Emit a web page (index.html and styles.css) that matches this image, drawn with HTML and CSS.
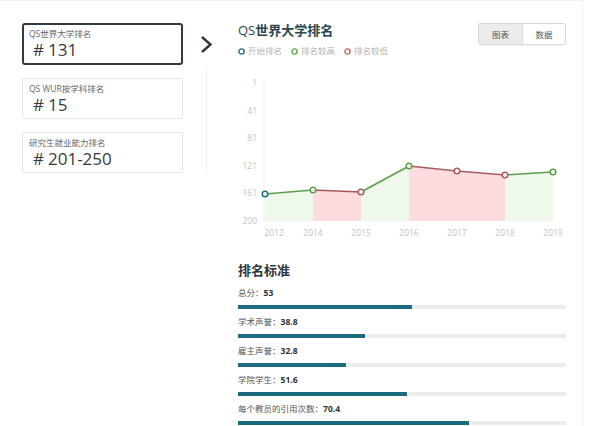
FILE: index.html
```html
<!DOCTYPE html>
<html lang="zh-CN">
<head>
<meta charset="utf-8">
<title>QS世界大学排名</title>
<link rel="stylesheet" href="styles.css">
</head>
<body>
<div class="page">
  <aside class="ranks">
    <div class="rank-card active">
      <div class="rank-label">QS世界大学排名</div>
      <div class="rank-value"><span class="hash">#</span>131</div>
    </div>
    <div class="rank-card">
      <div class="rank-label">QS WUR按学科排名</div>
      <div class="rank-value"><span class="hash">#</span>15</div>
    </div>
    <div class="rank-card">
      <div class="rank-label">研究生就业能力排名</div>
      <div class="rank-value"><span class="hash">#</span>201-250</div>
    </div>
  </aside>

  <div class="sep">
    <svg class="chevron" width="13" height="19" viewBox="0 0 13 19"><path d="M2 2 L10.5 9.5 L2 17" fill="none" stroke="#2b3a40" stroke-width="2.4"/></svg>
    <div class="vline"></div>
  </div>

  <main class="detail">
    <div class="head">
      <div class="head-left">
        <h2 class="title"><span class="qs">QS</span>世界大学排名</h2>
        <ul class="legend">
          <li><svg width="7" height="7" viewBox="0 0 7 7"><circle cx="3.5" cy="3.5" r="2.6" fill="#fff" stroke="#1d6b80" stroke-width="1.4"/></svg>开始排名</li>
          <li><svg width="7" height="7" viewBox="0 0 7 7"><circle cx="3.5" cy="3.5" r="2.6" fill="#fff" stroke="#5ea84a" stroke-width="1.4"/></svg>排名较高</li>
          <li><svg width="7" height="7" viewBox="0 0 7 7"><circle cx="3.5" cy="3.5" r="2.6" fill="#fff" stroke="#c46b6b" stroke-width="1.4"/></svg>排名较低</li>
        </ul>
      </div>
      <div class="toggle">
        <button class="tbtn on">图表</button><button class="tbtn">数据</button>
      </div>
    </div>

    <svg class="chart" width="332" height="172" viewBox="238 72 332 172">
      <line x1="264" y1="80" x2="264" y2="221" stroke="#f0f0f0" stroke-width="1"/>
      <g class="ylab" font-size="8.5" fill="#c2c2c2" text-anchor="end">
        <text x="257" y="86">1</text>
        <text x="257" y="113.6">41</text>
        <text x="257" y="141.2">81</text>
        <text x="257" y="168.8">121</text>
        <text x="257" y="196.4">161</text>
        <text x="257" y="224">200</text>
      </g>
      <polygon points="265,194 313,190 313,221 265,221" fill="#eef8eb"/>
      <polygon points="313,190 361,192 361,221 313,221" fill="#fddcdf"/>
      <polygon points="361,192 409,166 409,221 361,221" fill="#eef8eb"/>
      <polygon points="409,166 457,171 457,221 409,221" fill="#fddcdf"/>
      <polygon points="457,171 505,175 505,221 457,221" fill="#fddcdf"/>
      <polygon points="505,175 553,172 553,221 505,221" fill="#eef8eb"/>
      <g fill="none" stroke-width="1.5">
        <line x1="265" y1="194" x2="313" y2="190" stroke="#5a9f47"/>
        <line x1="313" y1="190" x2="361" y2="192" stroke="#a95a5c"/>
        <line x1="361" y1="192" x2="409" y2="166" stroke="#5a9f47"/>
        <line x1="409" y1="166" x2="457" y2="171" stroke="#a95a5c"/>
        <line x1="457" y1="171" x2="505" y2="175" stroke="#a95a5c"/>
        <line x1="505" y1="175" x2="553" y2="172" stroke="#5a9f47"/>
      </g>
      <g fill="#fff" stroke-width="1.5">
        <circle cx="265" cy="194" r="2.8" stroke="#1d6b80"/>
        <circle cx="313" cy="190" r="2.8" stroke="#5a9f47"/>
        <circle cx="361" cy="192" r="2.8" stroke="#a95a5c"/>
        <circle cx="409" cy="166" r="2.8" stroke="#5a9f47"/>
        <circle cx="457" cy="171" r="2.8" stroke="#a95a5c"/>
        <circle cx="505" cy="175" r="2.8" stroke="#a95a5c"/>
        <circle cx="553" cy="172" r="2.8" stroke="#5a9f47"/>
      </g>
      <g class="xlab" font-size="8.5" fill="#c2c2c2" text-anchor="middle">
        <text x="274" y="236">2012</text>
        <text x="313" y="236">2014</text>
        <text x="361" y="236">2015</text>
        <text x="409" y="236">2016</text>
        <text x="457" y="236">2017</text>
        <text x="505" y="236">2018</text>
        <text x="553" y="236">2019</text>
      </g>
    </svg>

    <h3 class="crit-title">排名标准</h3>
    <div class="crit">
      <div class="crit-item">
        <div class="crit-label">总分：<b>53</b></div>
        <div class="bar"><div class="fill" style="width:53%"></div></div>
      </div>
      <div class="crit-item">
        <div class="crit-label">学术声誉：<b>38.8</b></div>
        <div class="bar"><div class="fill" style="width:38.8%"></div></div>
      </div>
      <div class="crit-item">
        <div class="crit-label">雇主声誉：<b>32.8</b></div>
        <div class="bar"><div class="fill" style="width:32.8%"></div></div>
      </div>
      <div class="crit-item">
        <div class="crit-label">学院学生：<b>51.6</b></div>
        <div class="bar"><div class="fill" style="width:51.6%"></div></div>
      </div>
      <div class="crit-item">
        <div class="crit-label">每个教员的引用次数：<b>70.4</b></div>
        <div class="bar"><div class="fill" style="width:70.4%"></div></div>
      </div>
    </div>
  </main>
</div>
</body>
</html>
```

FILE: styles.css
```css
* { box-sizing: border-box; }

html, body {
  margin: 0;
  padding: 0;
  background: #fff;
}

body {
  font-family: "Open Sans", "Noto Sans CJK SC", sans-serif;
  color: #333;
  width: 590px;
  height: 426px;
  overflow: hidden;
}

.page {
  display: flex;
  width: 583px;
  height: 426px;
  border-top: 1px solid #f1f1f1;
  border-right: 1px solid #f1f1f1;
}

/* left rank cards */
.ranks {
  width: 183px;
  padding: 22px 0 0 22px;
  display: flex;
  flex-direction: column;
  gap: 13px;
  flex-shrink: 0;
}

.rank-card {
  width: 161px;
  height: 41px;
  border: 1px solid #e4e4e4;
  border-radius: 2px;
  padding: 4px 6px 2px;
  background: #fff;
}

.rank-card.active {
  height: 42px;
  border: 2px solid #2d3c42;
  border-radius: 3px;
  padding: 3px 5px 2px;
}

.rank-label {
  font-size: 8.5px;
  line-height: 11px;
  color: #666;
  white-space: nowrap;
}

.rank-value {
  font-size: 17px;
  line-height: 22px;
  color: #3a3a3a;
  padding-left: 4px;
  white-space: nowrap;
}

.hash {
  margin-right: 4px;
}

/* separator with chevron */
.sep {
  width: 55px;
  flex-shrink: 0;
  padding: 34px 0 0 17px;
}

.chevron {
  display: block;
}

.vline {
  width: 1px;
  height: 105px;
  margin: 14px 0 0 6px;
  background: #efefef;
}

/* right detail panel */
.detail {
  width: 328px;
  padding-top: 21px;
  flex-shrink: 0;
}

.head {
  display: flex;
  justify-content: space-between;
  align-items: flex-start;
}

.title {
  margin: 0;
  font-size: 13px;
  line-height: 16px;
  font-weight: 700;
  color: #2a4650;
  white-space: nowrap;
}

.title .qs {
  font-weight: 400;
}

.legend {
  list-style: none;
  margin: 7px 0 0;
  padding: 0;
  display: flex;
  gap: 9px;
  font-size: 8.5px;
  line-height: 12px;
  color: #b3b3b3;
}

.legend li {
  display: flex;
  align-items: center;
  gap: 3px;
}

.legend svg {
  display: block;
}

.toggle {
  display: flex;
  margin-top: 1px;
  border: 1px solid #d9d9d9;
  border-radius: 2px;
  box-shadow: 0 1px 1px rgba(0,0,0,0.05);
}

.tbtn {
  width: 43px;
  height: 20px;
  padding: 0;
  border: 0;
  background: #fff;
  font-family: inherit;
  font-size: 8.5px;
  color: #555;
}

.tbtn + .tbtn {
  border-left: 1px solid #dcdcdc;
}

.tbtn.on {
  background: #ececec;
}

.chart {
  display: block;
  margin: 15px 0 0 0;
  font-family: "Open Sans", "Noto Sans CJK SC", sans-serif;
}

.crit-title {
  margin: 17px 0 0;
  font-size: 13px;
  line-height: 18px;
  font-weight: 700;
  color: #2c3a40;
}

.crit {
  margin-top: 6px;
  display: flex;
  flex-direction: column;
  gap: 5px;
}

.crit-label {
  font-size: 8.5px;
  line-height: 16px;
  color: #555;
  white-space: nowrap;
}

.crit-label b {
  color: #333;
  font-weight: 700;
}

.bar {
  margin-top: 4px;
  height: 4px;
  background: #ececec;
}

.fill {
  height: 100%;
  background: #1b6a80;
}
```
